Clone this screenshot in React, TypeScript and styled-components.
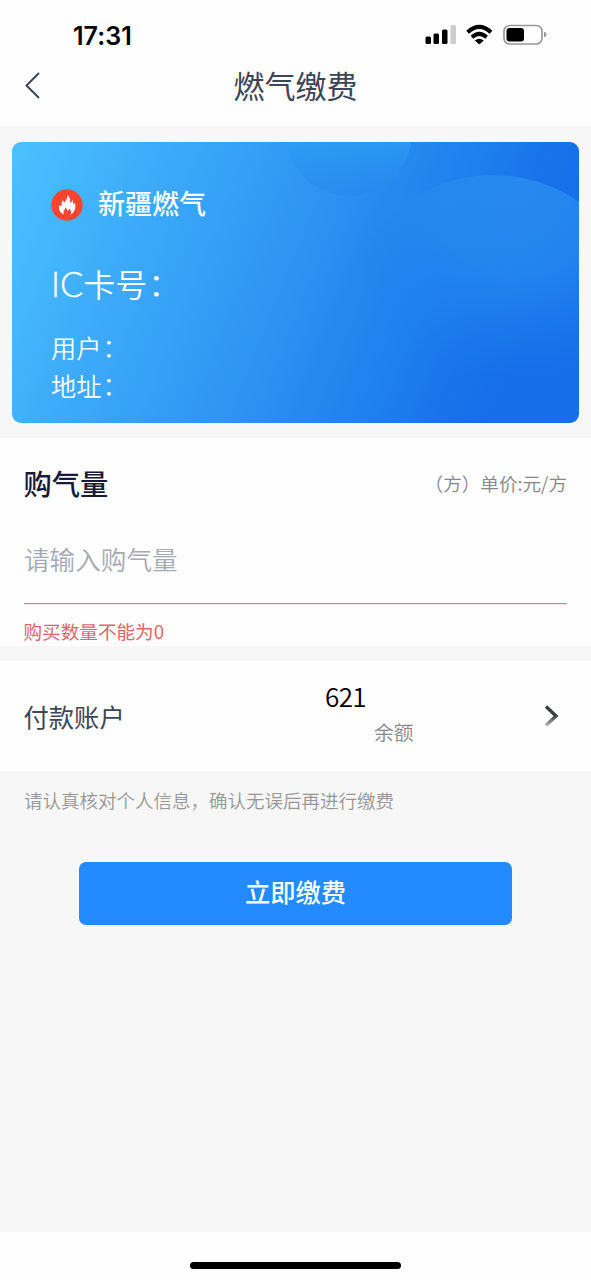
import React from "react";
import styled, { createGlobalStyle } from "styled-components";

const GlobalStyle = createGlobalStyle`
  * { box-sizing: border-box; }
  body {
    margin: 0;
    background: #fefefe;
    font-family: "Noto Sans CJK SC", sans-serif;
  }
`;

const Screen = styled.div`
  width: 591px;
  height: 1280px;
  display: flex;
  flex-direction: column;
  background: #fefefe;
  overflow: hidden;
`;

const StatusBar = styled.header`
  height: 59px;
  flex: none;
  display: flex;
  justify-content: space-between;
  align-items: flex-start;
  padding: 21px 44px 0 73px;
`;

const Clock = styled.span`
  font: 600 25px/30px Inter, sans-serif;
  letter-spacing: 0.05px;
  color: #000;
`;

const StatusIcons = styled.svg`
  display: block;
  margin-top: 1px;
`;

const NavBar = styled.nav`
  height: 67px;
  flex: none;
  display: grid;
  grid-template-columns: 80px 1fr 80px;
  align-items: start;
`;

const BackButton = styled.button`
  border: 0;
  background: none;
  padding: 12px 0 0 24px;
  text-align: left;
  line-height: 0;
`;

const Title = styled.h1`
  margin: 0;
  text-align: center;
  font-size: 31px;
  line-height: 52px;
  font-weight: 400;
  color: #3a4656;
`;

const Body = styled.main`
  height: 1106px;
  flex: none;
  background: #f7f7f7;
  padding-top: 16px;
`;

const Card = styled.section`
  position: relative;
  height: 281px;
  margin: 0 12px 15px;
  padding: 43px 39px 0;
  border-radius: 9px;
  overflow: hidden;
  color: #fff;
`;

const CardArt = styled.svg`
  position: absolute;
  inset: 0;
`;

const CardContent = styled.div`
  position: relative;
`;

const Brand = styled.div`
  display: flex;
  align-items: center;
  gap: 15px;
  height: 40px;
`;

const BrandName = styled.span`
  font-size: 27px;
  line-height: 40px;
  font-weight: 500;
  padding-bottom: 5px;
`;

const CardNumber = styled.div`
  margin-top: 34px;
  font-size: 32px;
  line-height: 48px;
  font-weight: 350;
`;

const Latin = styled.span`
  font-family: Lato, sans-serif;
  font-weight: 300;
  font-size: 34.5px;
  -webkit-text-stroke: 0.4px #fff;
`;

const Colon = styled.span`
  margin-left: 1px;
  vertical-align: 1px;
  line-height: 0;
`;

const CardField = styled.div`
  font-size: 25.2px;
  line-height: 38px;
  font-weight: 350;
`;

const CardFields = styled.div`
  margin-top: 20px;
`;

const Panel = styled.section<{ $height: number }>`
  height: ${(p) => p.$height}px;
  padding: 0 24px;
  background: #fefefe;
`;

const PanelHeader = styled.div`
  display: flex;
  align-items: center;
  justify-content: space-between;
  height: 89px;
`;

const PanelTitle = styled.h2`
  margin: 0 0 0 -0.5px;
  font-size: 28.3px;
  font-weight: 500;
  line-height: 42px;
  color: #16193a;
`;

const UnitPrice = styled.span`
  font-size: 18.6px;
  font-weight: 350;
  color: #85868f;
`;

const AmountInput = styled.div`
  height: 77px;
  padding-top: 13px;
  border-bottom: 1px solid #d87f8f;
  box-shadow: 0 1px 0 #fae4e8;
  font-size: 25.6px;
  line-height: 38px;
  font-weight: 350;
  color: #a5a9b3;
`;

const ErrorText = styled.p`
  margin: 0 0 0 -0.5px;
  padding-top: 13px;
  font-size: 18.6px;
  line-height: 28px;
  color: #e1646d;
`;

const AccountPanel = styled(Panel)`
  margin-top: 15px;
  display: grid;
  grid-template-columns: 300px 1fr 24px;
  align-items: center;
`;

const AccountLabel = styled.span`
  margin: 0 0 1px -0.5px;
  font-size: 25.3px;
  color: #3d4655;
`;

const AccountInfo = styled.div`
  display: flex;
  flex-direction: column;
  align-self: start;
  padding-top: 18px;
`;

const AccountNumber = styled.span`
  padding-left: 1px;
  font: 400 26px/34px "Noto Sans CJK SC", sans-serif;
  font-weight: 350;
  letter-spacing: -0.6px;
  color: #000;
`;

const Balance = styled.span`
  padding: 1px 0 0 50px;
  font-size: 19.8px;
  line-height: 36px;
  font-weight: 350;
  color: #85868f;
`;

const Notice = styled.p`
  margin: 0;
  padding: 15px 24px 0;
  font-size: 18.5px;
  line-height: 28px;
  font-weight: 350;
  color: #979797;
`;

const PayButton = styled.button`
  display: block;
  width: 433px;
  height: 63px;
  margin: 48px auto 0;
  padding: 0 0 5px;
  border: 0;
  border-radius: 7px;
  background: #238aff;
  color: #fff;
  font: 500 25.3px/58px "Noto Sans CJK SC", sans-serif;
`;

const HomeArea = styled.footer`
  flex: 1;
  display: flex;
  justify-content: center;
  padding-top: 30px;
`;

const HomeIndicator = styled.div`
  width: 211px;
  height: 7px;
  border-radius: 4px;
  background: #000;
`;

function StatusGlyphs() {
  return (
    <StatusIcons width="122" height="26" viewBox="0 0 122 26">
      <rect x="0.5" y="14.5" width="5.5" height="7.5" rx="1.5" />
      <rect x="8.5" y="11.5" width="5.5" height="10.5" rx="1.5" />
      <rect x="17" y="7.5" width="5.5" height="14.5" rx="1.5" />
      <rect x="25.5" y="3" width="5.5" height="19" rx="1.5" fill="#ccc" />
      <g fill="none" stroke="#000" strokeWidth="4">
        <path d="M42.6 10.2 Q54.3 -0.4 66 10.2" />
        <path d="M47 15.2 Q54.3 8.6 61.6 15.2" />
      </g>
      <path d="M49.8 18.4Q54.3 15 58.8 18.4L54.3 22.5Z" />
      <rect x="79" y="3.5" width="38" height="18.5" rx="5.8" fill="none" stroke="#999" strokeWidth="1.7" />
      <rect x="81.5" y="6" width="17.5" height="13.5" rx="3" />
      <path d="M119 9.7Q121.5 10.5 121.5 12.5T119 15.3Z" fill="#999" />
    </StatusIcons>
  );
}

function CardBackground() {
  return (
    <CardArt width="567" height="281" viewBox="0 0 567 281">
      <defs>
        <linearGradient id="base" gradientUnits="userSpaceOnUse" x1="0" y1="10" x2="510" y2="215">
          <stop offset="0" stopColor="#4ac1ff" />
          <stop offset="0.3" stopColor="#3aa7f8" />
          <stop offset="0.56" stopColor="#2c93f2" />
          <stop offset="0.76" stopColor="#1f82ee" />
          <stop offset="0.9" stopColor="#1874ea" />
          <stop offset="1" stopColor="#166ee9" />
        </linearGradient>
        <radialGradient id="large" gradientUnits="userSpaceOnUse" cx="510" cy="50" r="190">
          <stop offset="0" stopColor="#2a8df0" stopOpacity="0.85" />
          <stop offset="0.45" stopColor="#268bf0" stopOpacity="0.7" />
          <stop offset="1" stopColor="#1d7fee" stopOpacity="0" />
        </radialGradient>
        <linearGradient id="small" x1="0" y1="0.5" x2="0" y2="1">
          <stop offset="0" stopColor="#2f9ff5" stopOpacity="0.75" />
          <stop offset="1" stopColor="#2488ec" stopOpacity="0.5" />
        </linearGradient>
      </defs>
      <rect width="567" height="281" fill="url(#base)" />
      <circle cx="337" cy="-9" r="63" fill="url(#small)" />
      <circle cx="481" cy="186" r="153" fill="url(#large)" />
    </CardArt>
  );
}

function FlameBadge() {
  return (
    <svg width="32" height="32" viewBox="0 0 32 32">
      <circle cx="16" cy="16" r="15.7" fill="#fb4430" />
      <path
        fill="#fff"
        d="M16.5 5.5C18.8 8 19.6 10.6 19.2 14.2C20.6 13.7 21.2 12.4 21.1 10.6C22 12.4 22.1 13.6 22 15.2C23 14.9 23.5 14.2 23.8 13.6C25 17.5 24.8 22.5 19.6 25.8C20.7 23.3 19.9 21 18.1 19.4C17.8 20.8 17.2 21.5 16.3 22C16.1 20.5 15.5 19.3 14.3 18.6C14.2 20.4 11.8 22.3 12.8 25.6C8.6 24 7.2 19.5 8.2 15.8C9 16.8 9.7 17.2 10.7 17.2C10.3 14.8 10.7 12.8 12 11C12.2 12.2 12.7 13 13.4 13.4C15.4 11.2 16.6 8.8 16.5 5.5Z"
      />
    </svg>
  );
}

export default function App() {
  return (
    <>
      <GlobalStyle />
      <Screen>
        <StatusBar>
          <Clock>17:31</Clock>
          <StatusGlyphs />
        </StatusBar>
        <NavBar>
          <BackButton aria-label="返回">
            <svg width="18" height="30" viewBox="0 0 18 30" fill="none" stroke="#3a4656" strokeWidth="2">
              <path d="M15 2L2.5 14.5L15 27" />
            </svg>
          </BackButton>
          <Title>燃气缴费</Title>
        </NavBar>
        <Body>
          <Card>
            <CardBackground />
            <CardContent>
              <Brand>
                <FlameBadge />
                <BrandName>新疆燃气</BrandName>
              </Brand>
              <CardNumber>
                <Latin>IC</Latin>卡号<Colon>：</Colon>
              </CardNumber>
              <CardFields>
                <CardField>
                  用户<Colon>：</Colon>
                </CardField>
                <CardField>
                  地址<Colon>：</Colon>
                </CardField>
              </CardFields>
            </CardContent>
          </Card>
          <Panel $height={208}>
            <PanelHeader>
              <PanelTitle>购气量</PanelTitle>
              <UnitPrice>（方）单价:元/方</UnitPrice>
            </PanelHeader>
            <AmountInput>请输入购气量</AmountInput>
            <ErrorText>购买数量不能为0</ErrorText>
          </Panel>
          <AccountPanel $height={110}>
            <AccountLabel>付款账户</AccountLabel>
            <AccountInfo>
              <AccountNumber>621</AccountNumber>
              <Balance>余额</Balance>
            </AccountInfo>
            <svg width="24" height="26" viewBox="0 0 24 26" fill="none" stroke="url(#chevron)" strokeWidth="3.4">
              <defs>
                <linearGradient id="chevron" x1="0" y1="0" x2="0" y2="1">
                  <stop offset="0.5" stopColor="#3c3e43" />
                  <stop offset="1" stopColor="#3c3e43" stopOpacity="0.35" />
                </linearGradient>
              </defs>
              <path d="M3 3.5L13 13L3 22.5" />
            </svg>
          </AccountPanel>
          <Notice>请认真核对个人信息，确认无误后再进行缴费</Notice>
          <PayButton>立即缴费</PayButton>
        </Body>
        <HomeArea>
          <HomeIndicator />
        </HomeArea>
      </Screen>
    </>
  );
}
